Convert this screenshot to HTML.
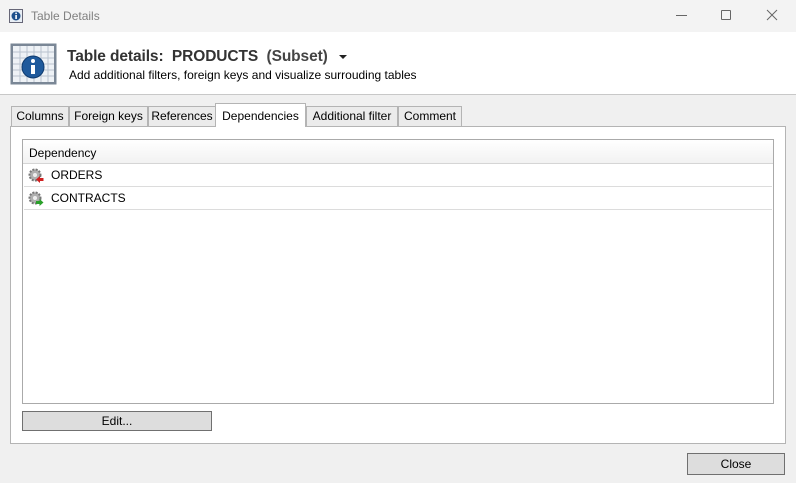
<!DOCTYPE html>
<html><head><style>
*{box-sizing:border-box;margin:0;padding:0}
body{width:796px;height:483px;background:#f0f0f0;font-family:"Liberation Sans",sans-serif;font-size:12px;color:#000;position:relative;overflow:hidden}
.abs{position:absolute}
.tab{position:absolute;top:106px;height:21px;border:1px solid #b4b4b4;border-bottom:none;background:#ebebeb;text-align:center;line-height:19px;font-size:12px}
.row{position:absolute;left:1px;right:1px;height:23px;border-bottom:1px solid #dcdcdc;line-height:22px;padding-left:27px}
.btn{position:absolute;border:1px solid #707070;background:#dddddd;text-align:center;font-size:12px}
</style></head><body>
<div class="abs" style="left:0;top:0;width:796px;height:32px;background:#f3f3f3"></div>
<svg class="abs" style="left:9px;top:9px" width="14" height="14"><rect x="0.5" y="0.5" width="13" height="13" fill="#e8eef5" stroke="#667"/><circle cx="7" cy="7" r="4.5" fill="#1c4f8c"/><rect x="6.3" y="6" width="1.6" height="4" fill="#fff"/><rect x="6.3" y="3.6" width="1.6" height="1.5" fill="#fff"/></svg>
<div class="abs" style="left:31px;top:9px;color:#808080;font-size:12px">Table Details</div>
<div class="abs" style="left:676px;top:15px;width:11px;height:1px;background:#666"></div>
<div class="abs" style="left:721px;top:10px;width:10px;height:10px;border:1px solid #666;border-radius:1px"></div>
<svg class="abs" style="left:766px;top:9px" width="12" height="12"><path d="M1 1L11 11M11 1L1 11" stroke="#666" stroke-width="1"/></svg>
<div class="abs" style="left:0;top:32px;width:796px;height:63px;background:#fff;border-bottom:1px solid #c8c8c8"></div>
<svg class="abs" style="left:10px;top:43px" width="47" height="42"><rect x="0.5" y="0.5" width="46" height="41" fill="#7a8796"/><rect x="3" y="3" width="41" height="36" fill="#eef2f6"/><g stroke="#b9c3cf" stroke-width="1"><path d="M3 9H44M3 15H44M3 21H44M3 27H44M3 33H44M10 3V39M17 3V39M24 3V39M31 3V39M38 3V39"/></g><circle cx="23" cy="24" r="11" fill="#1f5a9c" stroke="#0e3a6e"/><rect x="21" y="22" width="4" height="9" fill="#fff"/><circle cx="23" cy="18" r="2" fill="#fff"/></svg>
<div class="abs" style="left:67px;top:48px;font-size:15.5px;font-weight:bold;color:#333;letter-spacing:-0.1px;white-space:nowrap">Table details:&nbsp; PRODUCTS &nbsp;<span style="color:#444">(Subset)</span></div>
<svg class="abs" style="left:339px;top:55px" width="8" height="5"><path d="M0 0H8L4 4Z" fill="#222"/></svg>
<div class="abs" style="left:69px;top:68px;font-size:12px">Add additional filters, foreign keys and visualize surrouding tables</div>
<div class="tab" style="left:11px;width:58px">Columns</div>
<div class="tab" style="left:69px;width:79px">Foreign keys</div>
<div class="tab" style="left:148px;width:68px">References</div>
<div class="tab" style="left:306px;width:92px">Additional filter</div>
<div class="tab" style="left:398px;width:64px">Comment</div>
<div class="abs" style="left:10px;top:126px;width:776px;height:318px;background:#fff;border:1px solid #b4b4b4"></div>
<div class="tab" style="left:215px;top:103px;width:91px;height:24px;background:#fff;line-height:24px;z-index:2;border-color:#b4b4b4">Dependencies</div>
<div class="abs" style="left:22px;top:139px;width:752px;height:265px;border:1px solid #aaa;background:#fff">
 <div class="abs" style="left:0;top:0;right:0;height:24px;background:linear-gradient(#fff,#f2f2f2);border-bottom:1px solid #d5d5d5;line-height:26px;padding-left:6px">Dependency</div>
 <div class="row" style="top:24px">ORDERS</div>
 <div class="row" style="top:47px">CONTRACTS</div>
 <svg class="abs" style="left:5px;top:28px" width="16" height="16"><circle cx="7" cy="7" r="5.5" fill="#b0b0b0" stroke="#777" stroke-dasharray="2 1.3" stroke-width="2"/><circle cx="7" cy="7" r="2" fill="#eee"/><path d="M8 11.5L12 8V10H15.5V13H12V15Z" fill="#d02020"/></svg>
 <svg class="abs" style="left:5px;top:51px" width="16" height="16"><circle cx="7" cy="7" r="5.5" fill="#b0b0b0" stroke="#777" stroke-dasharray="2 1.3" stroke-width="2"/><circle cx="7" cy="7" r="2" fill="#eee"/><path d="M8 10H11.5V8L15.5 11.5L11.5 15V13H8Z" fill="#2aa02a"/></svg>
</div>
<div class="btn" style="left:22px;top:411px;width:190px;height:20px;line-height:18px">Edit...</div>
<div class="btn" style="left:687px;top:453px;width:98px;height:22px;line-height:20px">Close</div>
</body></html>
